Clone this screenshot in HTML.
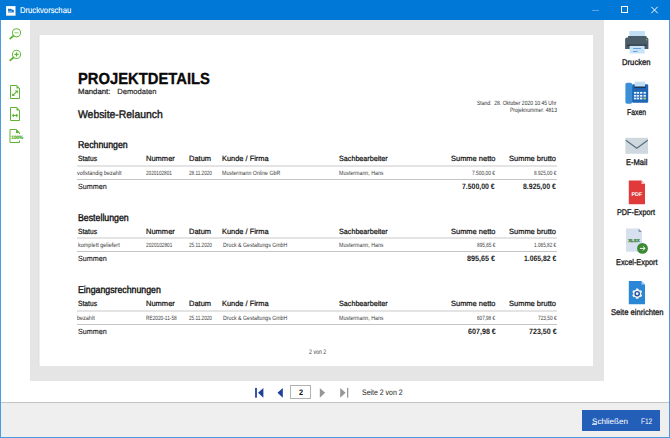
<!DOCTYPE html>
<html><head><meta charset="utf-8"><style>
html,body{margin:0;padding:0;}
body{width:670px;height:438px;position:relative;overflow:hidden;background:#fff;font-family:"Liberation Sans",sans-serif;text-rendering:geometricPrecision;}
.b{position:absolute;}
.t{position:absolute;line-height:1;white-space:pre;transform-origin:0 0;}
</style></head><body>
<div class="b" style="left:0;top:0;width:670px;height:20px;background:#0078d7"></div>
<div class="b" style="left:0;top:20px;width:1px;height:418px;background:#4a9be0"></div>
<div class="b" style="left:669px;top:20px;width:1px;height:418px;background:#4a9be0"></div>
<div class="b" style="left:0;top:437px;width:670px;height:1px;background:#4a9be0"></div>
<div class="b" style="left:30px;top:20px;width:574px;height:361px;background:#e5e5e5"></div>
<div class="b" style="left:38px;top:35px;width:1px;height:331px;background:#e0e0e0"></div>
<div class="b" style="left:39px;top:35px;width:1px;height:331px;background:#efefef"></div>
<div class="b" style="left:40px;top:35px;width:553px;height:331px;background:#ffffff"></div>
<div class="b" style="left:1px;top:402px;width:668px;height:1px;background:#c4c4c4"></div>
<div class="b" style="left:1px;top:403px;width:668px;height:34px;background:#efefef"></div>
<div class="b" style="left:582px;top:410px;width:78px;height:21px;background:#235eb8"></div>
<div class="b" style="left:290px;top:385px;width:19px;height:12px;border:1px solid #b2b2b2;background:#fff"></div>
<div class="b" style="left:592px;top:424px;width:5px;height:1px;background:rgba(255,255,255,0.75)"></div>
<div class="b" style="left:77px;top:165.0px;width:479.5px;height:2px;background:#e4e4e4"></div>
<div class="b" style="left:77px;top:179.0px;width:479.5px;height:1px;background:#c4c4c4"></div>
<div class="b" style="left:77px;top:237.4px;width:479.5px;height:2px;background:#e4e4e4"></div>
<div class="b" style="left:77px;top:251.4px;width:479.5px;height:1px;background:#c4c4c4"></div>
<div class="b" style="left:77px;top:309.8px;width:479.5px;height:2px;background:#e4e4e4"></div>
<div class="b" style="left:77px;top:323.8px;width:479.5px;height:1px;background:#c4c4c4"></div>
<svg class="b" style="left:0;top:0" width="670" height="438" viewBox="0 0 670 438">
<!-- title icon -->
<rect x="6.1" y="6.1" width="9.4" height="9.4" fill="#ffffff"/>
<rect x="6.1" y="14.6" width="9.4" height="0.9" fill="#efe6d6"/>
<path d="M8 8.8 L10.8 8.8 L13.9 10.2 L13.9 12.6 L8 12.6 Z" fill="#1f7ad0"/>
<rect x="8" y="10.9" width="3.8" height="0.7" fill="#a8d0f2"/>
<!-- window controls -->
<rect x="592" y="10" width="7" height="1" fill="#5aa5e6"/>
<rect x="621.5" y="6.5" width="6" height="6" fill="none" stroke="#ffffff" stroke-width="1"/>
<path d="M651.3 6.8 L657.7 13.2 M657.7 6.8 L651.3 13.2" stroke="#ffffff" stroke-width="1"/>
<!-- left sidebar: zoom out -->
<g fill="none" stroke="#66bd42">
<circle cx="16.5" cy="32.8" r="4.1" stroke-width="1.05"/>
<circle cx="16.5" cy="54.4" r="4.1" stroke-width="1.05"/>
</g>
<path d="M13.6 35.7 L10.2 38.7 M13.6 57.3 L10.2 60.3" stroke="#56b22c" stroke-width="1.7" stroke-linecap="round"/>
<rect x="14.4" y="32.2" width="4.2" height="1.2" fill="#9fd67f"/>
<rect x="14.4" y="53.8" width="4.2" height="1.2" fill="#5cb532"/><rect x="15.9" y="52.3" width="1.2" height="4.2" fill="#5cb532"/>
<!-- doc icons -->
<g fill="none" stroke="#5cb532" stroke-width="1">
<path d="M10.5 85.5 L16.8 85.5 L19.5 88.2 L19.5 98.5 L10.5 98.5 Z"/>
<path d="M10.5 107.5 L16.8 107.5 L19.5 110.2 L19.5 120.5 L10.5 120.5 Z"/>
<path d="M19.5 134 L19.5 132.7 L16.3 129.5 L10 129.5 L10 142.5 L19.5 142.5 L19.5 140.5"/>
</g>
<path d="M16.5 85.5 L16.5 88.5 L19.5 88.5 Z" fill="#5cb532"/>
<path d="M16.5 107.5 L16.5 110.5 L19.5 110.5 Z" fill="#5cb532"/>
<path d="M16 129.5 L16 133 L19.5 133 Z" fill="#5cb532"/>
<path d="M12.6 95.6 L17.4 90.8" stroke="#5cb532" stroke-width="1.1"/>
<path d="M12.2 93.2 L12.2 96 L15 96 Z M14.8 90.4 L17.8 90.4 L17.8 93.4 Z" fill="#5cb532"/>
<path d="M12.6 115.4 L17.4 115.4" stroke="#5cb532" stroke-width="1.1"/>
<path d="M11.8 115.4 L13.8 113.4 L13.8 117.4 Z M18.2 115.4 L16.2 113.4 L16.2 117.4 Z" fill="#5cb532"/>
<text x="11.3" y="138.6" font-family="Liberation Sans" font-size="4.8" font-weight="700" fill="#4fae28" stroke="#4fae28" stroke-width="0.2" textLength="12" lengthAdjust="spacingAndGlyphs">100%</text>
<!-- right panel: printer -->
<rect x="629.3" y="31" width="15.6" height="7" fill="#c3dff5"/>
<rect x="628" y="36" width="18.5" height="2" fill="#4a5d69"/>
<path d="M625.1 39.5 Q625.1 37.6 627 37.6 L646.5 37.6 Q648.4 37.6 648.4 39.5 L648.4 49 L625.1 49 Z" fill="#4a5d69"/>
<rect x="627" y="44.6" width="19.5" height="1.6" fill="#2e3d48"/>
<rect x="629.6" y="45.9" width="15" height="7.6" fill="#c8e2f7"/>
<rect x="633" y="48" width="8" height="0.9" fill="#5b9ad6"/>
<rect x="633" y="51" width="4.5" height="0.9" fill="#5b9ad6"/>
<circle cx="646.6" cy="39.8" r="0.8" fill="#7cc242"/>
<!-- fax -->
<rect x="632" y="84.2" width="16.2" height="18.5" rx="1.2" fill="#1f66b5"/>
<rect x="634.7" y="81.7" width="10.3" height="5.5" fill="#c3dff5"/>
<rect x="625.4" y="82.7" width="6.8" height="21.1" rx="1.8" fill="#3a8fd6"/>
<rect x="634.2" y="86.5" width="11.5" height="1.6" fill="#17365a"/>
<rect x="633.9" y="91.9" width="2.4" height="1.8" fill="#e8f2fb"/><rect x="636.8" y="91.9" width="2.4" height="1.8" fill="#e8f2fb"/><rect x="640.0" y="91.9" width="2.4" height="1.8" fill="#e8f2fb"/><rect x="643.5" y="91.9" width="2.4" height="1.8" fill="#e8f2fb"/><rect x="633.9" y="94.9" width="2.4" height="1.8" fill="#e8f2fb"/><rect x="636.8" y="94.9" width="2.4" height="1.8" fill="#e8f2fb"/><rect x="640.0" y="94.9" width="2.4" height="1.8" fill="#e8f2fb"/><rect x="643.5" y="94.9" width="2.4" height="1.8" fill="#e8f2fb"/><rect x="633.9" y="97.6" width="2.4" height="1.8" fill="#e8f2fb"/><rect x="636.8" y="97.6" width="2.4" height="1.8" fill="#e8f2fb"/><rect x="640.0" y="97.6" width="2.4" height="1.8" fill="#e8f2fb"/><rect x="643.5" y="97.6" width="2.4" height="1.8" fill="#b9d66a"/>
<!-- envelope -->
<rect x="625.4" y="137.8" width="22.6" height="16" fill="#cfd8df"/>
<path d="M625.8 140.3 L636.8 148.3 L647.7 140.3" fill="none" stroke="#587184" stroke-width="1.3"/>
<!-- pdf -->
<path d="M628.8 180.6 L641.5 180.6 L645 184.1 L645 204.3 L628.8 204.3 Z" fill="#e03a3a"/>
<path d="M641.5 180.6 L645 184.1 L641.5 184.1 Z" fill="#f6c9c9"/>
<text x="631.4" y="196.2" font-family="Liberation Sans" font-size="5.6" font-weight="700" fill="#ffffff" textLength="11" lengthAdjust="spacingAndGlyphs">PDF</text>
<!-- excel -->
<path d="M626 228.6 L638.6 228.6 L642 232 L642 251.7 L626 251.7 Z" fill="#d6e0ee"/>
<path d="M638.6 228.6 L642 232 L638.6 232 Z" fill="#7f98b8"/>
<text x="628.2" y="242.2" font-family="Liberation Sans" font-size="4.2" font-weight="700" fill="#2f7f2a" stroke="#2f7f2a" stroke-width="0.25" textLength="11.5" lengthAdjust="spacingAndGlyphs">XLSX</text>
<circle cx="642.5" cy="248.4" r="5.4" fill="#3b8b36"/>
<path d="M639.9 248.4 L645 248.4 M642.9 246.3 L645 248.4 L642.9 250.5" fill="none" stroke="#ffffff" stroke-width="0.95"/>
<!-- seite einrichten -->
<path d="M628.8 281 L641.5 281 L645 284.5 L645 304.3 L628.8 304.3 Z" fill="#2a87d6"/>
<path d="M641.5 281 L645 284.5 L641.5 284.5 Z" fill="#a9cff0"/>
<g transform="translate(637.2 293.7)">
<circle r="4" fill="#f4f1ea"/>
<g fill="#f4f1ea">
<rect x="-1.3" y="-5.1" width="2.6" height="10.2" rx="0.6"/>
<rect x="-1.3" y="-5.1" width="2.6" height="10.2" rx="0.6" transform="rotate(60)"/>
<rect x="-1.3" y="-5.1" width="2.6" height="10.2" rx="0.6" transform="rotate(120)"/>
</g>
<circle r="2.75" fill="#1b4fa3"/>
<circle r="1.35" fill="#ffffff"/>
</g>
<!-- nav -->
<rect x="255.1" y="387.9" width="1.8" height="9.8" fill="#24439c"/>
<path d="M258 392.8 L263.4 387.9 L263.4 397.7 Z" fill="#21409a"/>
<path d="M277.5 392.8 L282.8 387.9 L282.8 397.7 Z" fill="#21409a"/>
<path d="M325.1 392.8 L319.8 387.9 L319.8 397.7 Z" fill="#979797"/>
<path d="M345.6 392.8 L340.2 387.9 L340.2 397.7 Z" fill="#979797"/>
<rect x="347" y="387.9" width="1.3" height="9.8" fill="#979797"/>
</svg>

<span class="t" style="left:19.5px;top:6px;font-size:8.4px;font-weight:400;color:#ffffff;-webkit-text-stroke:0.12px #ffffff;transform:scaleX(0.9161);">Druckvorschau</span><span class="t" style="left:77.58px;top:72px;font-size:16px;font-weight:700;color:#0a0a0a;-webkit-text-stroke:0.35px #0a0a0a;transform:scaleX(0.9232);">PROJEKTDETAILS</span><span class="t" style="left:78.2px;top:88px;font-size:7.6px;font-weight:400;color:#1a1a1a;-webkit-text-stroke:0.22px #1a1a1a;transform:scaleX(1.0226);">Mandant:</span><span class="t" style="left:117.3px;top:88px;font-size:7.6px;font-weight:400;color:#222222;-webkit-text-stroke:0.15px #222222;">Demodaten</span><span class="t" style="left:77.5px;top:110px;font-size:11px;font-weight:400;color:#1a1a1a;-webkit-text-stroke:0.42px #1a1a1a;transform:scaleX(0.9444);">Website-Relaunch</span><span class="t" style="left:477.0px;top:101px;font-size:6.2px;font-weight:400;color:#333333;transform:scaleX(0.8102);">Stand:  28. Oktober 2020 10:45 Uhr</span><span class="t" style="left:509.8px;top:108px;font-size:6.2px;font-weight:400;color:#333333;transform:scaleX(0.8175);">Projeknummer: 4813</span><span class="t" style="left:77.8px;top:141px;font-size:10px;font-weight:400;color:#111111;-webkit-text-stroke:0.4px #111111;transform:scaleX(0.8772);">Rechnungen</span><span class="t" style="left:77.8px;top:155px;font-size:7.6px;font-weight:400;color:#111111;-webkit-text-stroke:0.22px #111111;transform:scaleX(0.8818);">Status</span><span class="t" style="left:146.2px;top:155px;font-size:7.6px;font-weight:400;color:#111111;-webkit-text-stroke:0.22px #111111;transform:scaleX(0.9897);">Nummer</span><span class="t" style="left:188.5px;top:155px;font-size:7.6px;font-weight:400;color:#111111;-webkit-text-stroke:0.22px #111111;transform:scaleX(0.9864);">Datum</span><span class="t" style="left:222.0px;top:155px;font-size:7.6px;font-weight:400;color:#111111;-webkit-text-stroke:0.22px #111111;transform:scaleX(0.9771);">Kunde / Firma</span><span class="t" style="left:339.3px;top:155px;font-size:7.6px;font-weight:400;color:#111111;-webkit-text-stroke:0.22px #111111;transform:scaleX(0.9462);">Sachbearbeiter</span><span class="t" style="left:451.0px;top:155px;font-size:7.6px;font-weight:400;color:#111111;-webkit-text-stroke:0.22px #111111;transform:scaleX(0.9844);">Summe netto</span><span class="t" style="left:508.9px;top:155px;font-size:7.6px;font-weight:400;color:#111111;-webkit-text-stroke:0.22px #111111;transform:scaleX(0.9854);">Summe brutto</span><span class="t" style="left:77.4px;top:171px;font-size:6.2px;font-weight:400;color:#3a3a3a;transform:scaleX(0.8745);">vollständig bezahlt</span><span class="t" style="left:146.4px;top:171px;font-size:6.2px;font-weight:400;color:#3a3a3a;transform:scaleX(0.75);">2020102801</span><span class="t" style="left:188.5px;top:171px;font-size:6.2px;font-weight:400;color:#3a3a3a;transform:scaleX(0.7516);">28.11.2020</span><span class="t" style="left:222.0px;top:171px;font-size:6.2px;font-weight:400;color:#3a3a3a;transform:scaleX(0.8529);">Mustermann Online GbR</span><span class="t" style="left:339.3px;top:171px;font-size:6.2px;font-weight:400;color:#3a3a3a;transform:scaleX(0.85);">Mustermann, Hans</span><span class="t" style="left:472.31px;top:171px;font-size:6.2px;font-weight:400;color:#3a3a3a;transform:scaleX(0.7857);">7.500,00 €</span><span class="t" style="left:534.2px;top:171px;font-size:6.2px;font-weight:400;color:#3a3a3a;transform:scaleX(0.7621);">8.925,00 €</span><span class="t" style="left:77.7px;top:183px;font-size:7.6px;font-weight:400;color:#1a1a1a;-webkit-text-stroke:0.12px #1a1a1a;transform:scaleX(0.9467);">Summen</span><span class="t" style="left:462.1px;top:183px;font-size:7.8px;font-weight:700;color:#1a1a1a;transform:scaleX(0.8865);">7.500,00 €</span><span class="t" style="left:523.4px;top:183px;font-size:7.8px;font-weight:700;color:#1a1a1a;transform:scaleX(0.8892);">8.925,00 €</span><span class="t" style="left:78.1px;top:214px;font-size:10px;font-weight:400;color:#111111;-webkit-text-stroke:0.4px #111111;transform:scaleX(0.8776);">Bestellungen</span><span class="t" style="left:77.8px;top:228px;font-size:7.6px;font-weight:400;color:#111111;-webkit-text-stroke:0.22px #111111;transform:scaleX(0.8818);">Status</span><span class="t" style="left:146.2px;top:228px;font-size:7.6px;font-weight:400;color:#111111;-webkit-text-stroke:0.22px #111111;transform:scaleX(0.9897);">Nummer</span><span class="t" style="left:188.5px;top:228px;font-size:7.6px;font-weight:400;color:#111111;-webkit-text-stroke:0.22px #111111;transform:scaleX(0.9864);">Datum</span><span class="t" style="left:222.0px;top:228px;font-size:7.6px;font-weight:400;color:#111111;-webkit-text-stroke:0.22px #111111;transform:scaleX(0.9771);">Kunde / Firma</span><span class="t" style="left:339.3px;top:228px;font-size:7.6px;font-weight:400;color:#111111;-webkit-text-stroke:0.22px #111111;transform:scaleX(0.9462);">Sachbearbeiter</span><span class="t" style="left:451.0px;top:228px;font-size:7.6px;font-weight:400;color:#111111;-webkit-text-stroke:0.22px #111111;transform:scaleX(0.9844);">Summe netto</span><span class="t" style="left:508.9px;top:228px;font-size:7.6px;font-weight:400;color:#111111;-webkit-text-stroke:0.22px #111111;transform:scaleX(0.9854);">Summe brutto</span><span class="t" style="left:77.6px;top:243px;font-size:6.2px;font-weight:400;color:#3a3a3a;transform:scaleX(0.8851);">komplett geliefert</span><span class="t" style="left:146.2px;top:243px;font-size:6.2px;font-weight:400;color:#3a3a3a;transform:scaleX(0.7647);">2020102801</span><span class="t" style="left:188.6px;top:243px;font-size:6.2px;font-weight:400;color:#3a3a3a;transform:scaleX(0.7516);">25.11.2020</span><span class="t" style="left:222.6px;top:243px;font-size:6.2px;font-weight:400;color:#3a3a3a;transform:scaleX(0.8421);">Druck &amp; Gestaltungs GmbH</span><span class="t" style="left:339.3px;top:243px;font-size:6.2px;font-weight:400;color:#3a3a3a;transform:scaleX(0.85);">Mustermann, Hans</span><span class="t" style="left:476.9px;top:243px;font-size:6.2px;font-weight:400;color:#3a3a3a;transform:scaleX(0.7667);">895,65 €</span><span class="t" style="left:534.3px;top:243px;font-size:6.2px;font-weight:400;color:#3a3a3a;transform:scaleX(0.7586);">1.065,82 €</span><span class="t" style="left:77.7px;top:255px;font-size:7.6px;font-weight:400;color:#1a1a1a;-webkit-text-stroke:0.12px #1a1a1a;transform:scaleX(0.9467);">Summen</span><span class="t" style="left:467.3px;top:255px;font-size:7.8px;font-weight:700;color:#1a1a1a;transform:scaleX(0.9233);">895,65 €</span><span class="t" style="left:524.0px;top:255px;font-size:7.8px;font-weight:700;color:#1a1a1a;transform:scaleX(0.873);">1.065,82 €</span><span class="t" style="left:78.4px;top:286px;font-size:10px;font-weight:400;color:#111111;-webkit-text-stroke:0.4px #111111;transform:scaleX(0.8768);">Eingangsrechnungen</span><span class="t" style="left:77.8px;top:300px;font-size:7.6px;font-weight:400;color:#111111;-webkit-text-stroke:0.22px #111111;transform:scaleX(0.8818);">Status</span><span class="t" style="left:146.2px;top:300px;font-size:7.6px;font-weight:400;color:#111111;-webkit-text-stroke:0.22px #111111;transform:scaleX(0.9897);">Nummer</span><span class="t" style="left:188.5px;top:300px;font-size:7.6px;font-weight:400;color:#111111;-webkit-text-stroke:0.22px #111111;transform:scaleX(0.9864);">Datum</span><span class="t" style="left:222.0px;top:300px;font-size:7.6px;font-weight:400;color:#111111;-webkit-text-stroke:0.22px #111111;transform:scaleX(0.9771);">Kunde / Firma</span><span class="t" style="left:339.3px;top:300px;font-size:7.6px;font-weight:400;color:#111111;-webkit-text-stroke:0.22px #111111;transform:scaleX(0.9462);">Sachbearbeiter</span><span class="t" style="left:451.0px;top:300px;font-size:7.6px;font-weight:400;color:#111111;-webkit-text-stroke:0.22px #111111;transform:scaleX(0.9844);">Summe netto</span><span class="t" style="left:508.9px;top:300px;font-size:7.6px;font-weight:400;color:#111111;-webkit-text-stroke:0.22px #111111;transform:scaleX(0.9854);">Summe brutto</span><span class="t" style="left:77.3px;top:316px;font-size:6.2px;font-weight:400;color:#3a3a3a;transform:scaleX(0.885);">bezahlt</span><span class="t" style="left:146.2px;top:316px;font-size:6.2px;font-weight:400;color:#3a3a3a;transform:scaleX(0.7725);">RE2020-11-58</span><span class="t" style="left:188.6px;top:316px;font-size:6.2px;font-weight:400;color:#3a3a3a;transform:scaleX(0.7516);">25.11.2020</span><span class="t" style="left:222.6px;top:316px;font-size:6.2px;font-weight:400;color:#3a3a3a;transform:scaleX(0.8421);">Druck &amp; Gestaltungs GmbH</span><span class="t" style="left:339.3px;top:316px;font-size:6.2px;font-weight:400;color:#3a3a3a;transform:scaleX(0.85);">Mustermann, Hans</span><span class="t" style="left:477.2px;top:316px;font-size:6.2px;font-weight:400;color:#3a3a3a;transform:scaleX(0.7458);">607,98 €</span><span class="t" style="left:537.62px;top:316px;font-size:6.2px;font-weight:400;color:#3a3a3a;transform:scaleX(0.7783);">723,50 €</span><span class="t" style="left:77.7px;top:328px;font-size:7.6px;font-weight:400;color:#1a1a1a;-webkit-text-stroke:0.12px #1a1a1a;transform:scaleX(0.9467);">Summen</span><span class="t" style="left:467.5px;top:328px;font-size:7.8px;font-weight:700;color:#1a1a1a;transform:scaleX(0.9167);">607,98 €</span><span class="t" style="left:529.0px;top:328px;font-size:7.8px;font-weight:700;color:#1a1a1a;transform:scaleX(0.91);">723,50 €</span><span class="t" style="left:308.5px;top:350px;font-size:6.6px;font-weight:400;color:#444444;transform:scaleX(0.8);">2 von 2</span><span class="t" style="left:361.9px;top:389px;font-size:8px;font-weight:400;color:#222222;transform:scaleX(0.8702);">Seite 2 von 2</span><span class="t" style="left:298.5px;top:389px;font-size:8px;font-weight:700;color:#111111;transform:scaleX(0.9);">2</span><span class="t" style="left:622.4px;top:58px;font-size:8.3px;font-weight:400;color:#1a1a1a;-webkit-text-stroke:0.32px #1a1a1a;transform:scaleX(0.9258);">Drucken</span><span class="t" style="left:627.0px;top:108px;font-size:8.3px;font-weight:400;color:#1a1a1a;-webkit-text-stroke:0.32px #1a1a1a;transform:scaleX(0.8261);">Faxen</span><span class="t" style="left:626.0px;top:158px;font-size:8.3px;font-weight:400;color:#1a1a1a;-webkit-text-stroke:0.32px #1a1a1a;transform:scaleX(0.9083);">E-Mail</span><span class="t" style="left:617.3px;top:208px;font-size:8.3px;font-weight:400;color:#1a1a1a;-webkit-text-stroke:0.32px #1a1a1a;transform:scaleX(0.875);">PDF-Export</span><span class="t" style="left:615.8px;top:258px;font-size:8.3px;font-weight:400;color:#1a1a1a;-webkit-text-stroke:0.32px #1a1a1a;transform:scaleX(0.8833);">Excel-Export</span><span class="t" style="left:610.6px;top:308px;font-size:8.3px;font-weight:400;color:#1a1a1a;-webkit-text-stroke:0.32px #1a1a1a;transform:scaleX(0.9193);">Seite einrichten</span><span class="t" style="left:592.1px;top:418px;font-size:8px;font-weight:400;color:#ffffff;transform:scaleX(1.0083);">Schließen</span><span class="t" style="left:640.9px;top:418px;font-size:8px;font-weight:400;color:#ffffff;transform:scaleX(0.8143);">F12</span>
</body></html>
